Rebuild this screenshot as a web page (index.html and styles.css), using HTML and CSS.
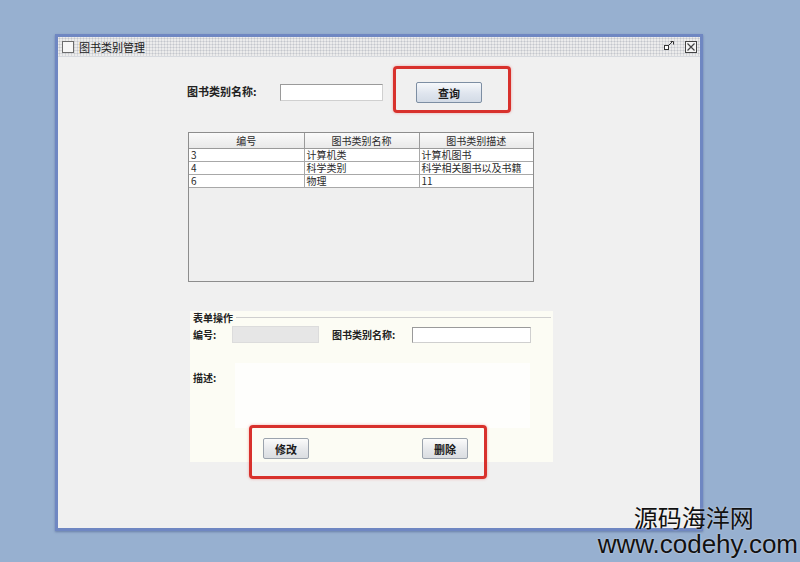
FILE: index.html
```html
<!DOCTYPE html>
<html lang="zh">
<head>
<meta charset="utf-8">
<title>图书类别管理</title>
<link rel="stylesheet" href="styles.css">
</head>
<body>
<div class="desk">
  <div class="window">
    <div class="titlebar">
      <span class="tb-check"></span>
      <span class="tb-title">图书类别管理</span>
      <span class="tb-spacer"></span>
      <svg class="tb-restore" width="10" height="10" viewBox="0 0 10 10">
        <rect x="0.5" y="4.5" width="4" height="4" fill="#fff" stroke="#333" stroke-width="1"/>
        <path d="M5 4 L9 0 M6.5 0.5 H9.5 V3.5" fill="none" stroke="#333" stroke-width="1"/>
      </svg>
      <svg class="tb-close" width="12" height="12" viewBox="0 0 12 12">
        <rect x="0.5" y="0.5" width="11" height="11" fill="#f4f4f4" stroke="#444" stroke-width="1"/>
        <path d="M2.5 2.5 L9.5 9.5 M9.5 2.5 L2.5 9.5" stroke="#444" stroke-width="1.2"/>
      </svg>
    </div>
    <div class="content">
      <div class="query">
        <span class="q-label">图书类别名称:</span>
        <span class="q-input"></span>
        <span class="q-btnwrap">
          <span class="btn btn-blue">查询</span>
          <span class="redbox redbox-query"></span>
        </span>
      </div>

      <div class="grid">
        <table class="tbl">
          <colgroup>
            <col class="c1"><col class="c2"><col class="c3">
          </colgroup>
          <thead>
            <tr><th>编号</th><th>图书类别名称</th><th>图书类别描述</th></tr>
          </thead>
          <tbody>
            <tr><td>3</td><td>计算机类</td><td>计算机图书</td></tr>
            <tr><td>4</td><td>科学类别</td><td>科学相关图书以及书籍</td></tr>
            <tr><td>6</td><td>物理</td><td>11</td></tr>
          </tbody>
        </table>
      </div>

      <div class="panel">
        <div class="legend">
          <span class="legend-text">表单操作</span>
          <span class="legend-line"></span>
        </div>
        <div class="row1">
          <span class="f-label f-id">编号:</span>
          <span class="f-disabled"></span>
          <span class="f-label f-name">图书类别名称:</span>
          <span class="f-input"></span>
        </div>
        <div class="row2">
          <span class="f-label f-desc">描述:</span>
          <span class="f-area"></span>
        </div>
        <div class="row3">
          <span class="btn btn-gray">修改</span>
          <span class="btn btn-gray">删除</span>
        </div>
        <span class="redbox redbox-actions"></span>
      </div>
    </div>
  </div>
  <div class="watermark">
    <div class="wm-cn">源码海洋网</div>
    <div class="wm-en">www.codehy.com</div>
  </div>
</div>
</body>
</html>
```

FILE: styles.css
```css
html, body {
  margin: 0;
  padding: 0;
}
body {
  width: 800px;
  height: 562px;
  overflow: hidden;
  background: #97b0d0;
  font-family: "Noto Sans CJK SC", "Liberation Sans", sans-serif;
  color: #1a1a1a;
}
.desk {
  position: relative;
  width: 800px;
  height: 562px;
  box-sizing: border-box;
  padding: 34px 0 0 55px;
}
.window {
  width: 648px;
  height: 497px;
  box-sizing: border-box;
  border: 3px solid #6f87c2;
  background: #f0f0f0;
  display: flex;
  flex-direction: column;
  box-shadow: 0 1px 2px rgba(60, 80, 130, 0.5);
}
.titlebar {
  height: 19px;
  flex: none;
  display: flex;
  align-items: center;
  padding: 0 3px 0 4px;
  background-color: #ececec;
  background-image: radial-gradient(circle, #c3c6cc 0.9px, transparent 1.1px);
  background-size: 3px 3px;
  border-bottom: 1px solid #d6d9de;
}
.tb-check {
  width: 10px;
  height: 10px;
  border: 1px solid #6d6d6d;
  background: #f7f7f7;
}
.tb-title {
  margin-left: 5px;
  font-size: 11px;
  line-height: 12px;
  color: #202020;
  padding-right: 2px;
}
.tb-spacer {
  flex: 1;
}
.tb-restore {
  margin-right: 11px;
  margin-top: -2px;
}
.content {
  flex: 1;
  padding-top: 25px;
  display: flex;
  flex-direction: column;
  align-items: flex-start;
}
.query {
  display: flex;
  align-items: center;
  height: 21px;
  margin-left: 129px;
}
.q-label {
  width: 93px;
  font-size: 11px;
  font-weight: bold;
  line-height: 14px;
  margin-top: -3px;
  color: #222;
}
.q-input {
  width: 103px;
  height: 17px;
  box-sizing: border-box;
  border: 1px solid #9a9a9a;
  border-right-color: #d0d0d0;
  border-bottom-color: #d0d0d0;
  background: #fff;
}
.q-btnwrap {
  position: relative;
  margin-left: 33px;
  display: flex;
}
.btn {
  display: flex;
  align-items: center;
  justify-content: center;
  height: 21px;
  box-sizing: border-box;
  font-size: 11px;
  font-weight: bold;
  color: #1c1c1c;
}
.btn-blue {
  width: 66px;
  border: 1px solid #7d8ea3;
  border-radius: 2px;
  background: linear-gradient(#f6f8fb, #dfe5ee 55%, #d3dbe6);
}
.btn-gray {
  width: 46px;
  border: 1px solid #9ba3ad;
  border-radius: 2px;
  background: linear-gradient(#fbfbfb, #e6e8eb 55%, #dadde1);
}
.redbox {
  position: absolute;
  box-sizing: border-box;
  border: 3px solid #d8312c;
  border-radius: 4px;
  box-shadow: 0 0 3px rgba(230, 70, 70, 0.45);
  pointer-events: none;
}
.redbox-query {
  left: -23px;
  top: -16px;
  width: 118px;
  height: 47px;
}
.grid {
  margin: 29px 0 0 130px;
  width: 346px;
  height: 150px;
  box-sizing: border-box;
  border: 1px solid #8d8d8d;
  background: #efefef;
}
.tbl {
  width: 344px;
  border-collapse: collapse;
  table-layout: fixed;
  font-size: 10px;
  color: #2a2a2a;
}
.c1 { width: 115px; }
.c2 { width: 115px; }
.c3 { width: 114px; }
.tbl th {
  height: 15px;
  padding: 0;
  font-weight: normal;
  text-align: center;
  background: linear-gradient(#fafafa, #e9e9e9);
  border-right: 1px solid #9a9a9a;
  border-bottom: 1px solid #9a9a9a;
  line-height: 15px;
}
.tbl th:last-child {
  border-right: none;
}
.tbl td {
  height: 12px;
  padding: 0 0 0 2px;
  line-height: 12px;
  background: #fff;
  border-right: 1px solid #a8a8a8;
  border-bottom: 1px solid #a8a8a8;
  white-space: nowrap;
  overflow: hidden;
}
.tbl td:last-child {
  border-right: none;
}
.panel {
  position: relative;
  margin: 29px 0 0 132px;
  width: 363px;
  height: 151px;
  box-sizing: border-box;
  padding: 0 2px 0 3px;
  background: #fcfcf4;
  display: flex;
  flex-direction: column;
}
.legend {
  display: flex;
  align-items: center;
  height: 13px;
}
.legend-text {
  font-size: 10px;
  font-weight: bold;
  line-height: 13px;
  color: #222;
}
.legend-line {
  flex: 1;
  margin-left: 3px;
  border-top: 1px solid #cfcfcf;
}
.row1 {
  display: flex;
  align-items: center;
  height: 17px;
  margin-top: 2px;
}
.f-label {
  font-size: 10px;
  font-weight: bold;
  color: #222;
}
.f-id {
  width: 39px;
}
.f-disabled {
  width: 87px;
  height: 17px;
  box-sizing: border-box;
  border: 1px solid #dcdcdc;
  background: #e6e6e6;
}
.f-name {
  width: 80px;
  margin-left: 13px;
}
.f-input {
  width: 119px;
  height: 16px;
  box-sizing: border-box;
  border: 1px solid #9a9a9a;
  border-right-color: #cfcfcf;
  border-bottom-color: #cfcfcf;
  background: #fff;
}
.row2 {
  display: flex;
  align-items: flex-start;
  margin-top: 20px;
  height: 65px;
}
.f-desc {
  width: 42px;
  margin-top: 7px;
}
.f-area {
  width: 295px;
  height: 65px;
  background: #fefefc;
}
.row3 {
  display: flex;
  margin-top: 10px;
  margin-left: 70px;
  gap: 113px;
}
.redbox-actions {
  left: 59px;
  top: 114px;
  width: 238px;
  height: 54px;
}
.watermark {
  position: absolute;
  right: 2px;
  top: 503px;
  text-align: center;
  color: #111;
  text-shadow: 0 0 2px rgba(255, 255, 255, 0.6);
}
.wm-cn {
  font-family: "Noto Sans CJK SC", sans-serif;
  font-size: 24px;
  line-height: 28px;
  padding-right: 8px;
}
.wm-en {
  font-family: "Liberation Sans", "DejaVu Sans", sans-serif;
  font-size: 26px;
  line-height: 26px;
}
```
